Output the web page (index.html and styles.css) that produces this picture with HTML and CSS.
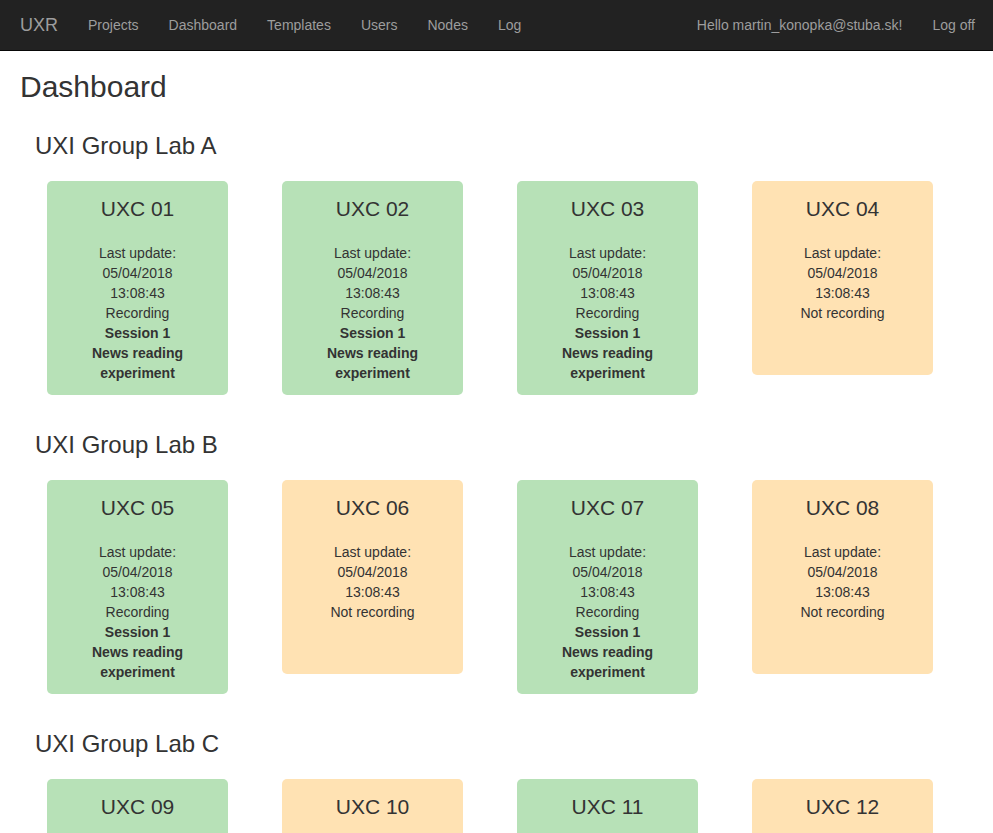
FILE: index.html
```html
<!DOCTYPE html>
<html lang="en">
<head>
<meta charset="utf-8">
<meta name="viewport" content="width=device-width, initial-scale=1">
<title>Dashboard - UXR</title>
<link rel="stylesheet" href="styles.css">
</head>
<body>
<header class="navbar">
  <a class="brand" href="#">UXR</a>
  <nav class="nav">
    <a href="#">Projects</a>
    <a href="#">Dashboard</a>
    <a href="#">Templates</a>
    <a href="#">Users</a>
    <a href="#">Nodes</a>
    <a href="#">Log</a>
  </nav>
  <nav class="nav account">
    <a href="#">Hello martin_konopka@stuba.sk!</a>
    <a href="#">Log off</a>
  </nav>
</header>
<main>
  <h1>Dashboard</h1>
  <section class="group">
    <h2>UXI Group Lab A</h2>
    <div class="nodes">
      <article class="node recording"><h3>UXC 01</h3><p>Last update: 05/04/2018 13:08:43</p><p>Recording</p><p><strong>Session 1</strong></p><p><strong>News reading experiment</strong></p></article>
      <article class="node recording"><h3>UXC 02</h3><p>Last update: 05/04/2018 13:08:43</p><p>Recording</p><p><strong>Session 1</strong></p><p><strong>News reading experiment</strong></p></article>
      <article class="node recording"><h3>UXC 03</h3><p>Last update: 05/04/2018 13:08:43</p><p>Recording</p><p><strong>Session 1</strong></p><p><strong>News reading experiment</strong></p></article>
      <article class="node"><h3>UXC 04</h3><p>Last update: 05/04/2018 13:08:43</p><p>Not recording</p></article>
    </div>
  </section>
  <section class="group">
    <h2>UXI Group Lab B</h2>
    <div class="nodes">
      <article class="node recording"><h3>UXC 05</h3><p>Last update: 05/04/2018 13:08:43</p><p>Recording</p><p><strong>Session 1</strong></p><p><strong>News reading experiment</strong></p></article>
      <article class="node"><h3>UXC 06</h3><p>Last update: 05/04/2018 13:08:43</p><p>Not recording</p></article>
      <article class="node recording"><h3>UXC 07</h3><p>Last update: 05/04/2018 13:08:43</p><p>Recording</p><p><strong>Session 1</strong></p><p><strong>News reading experiment</strong></p></article>
      <article class="node"><h3>UXC 08</h3><p>Last update: 05/04/2018 13:08:43</p><p>Not recording</p></article>
    </div>
  </section>
  <section class="group">
    <h2>UXI Group Lab C</h2>
    <div class="nodes">
      <article class="node recording"><h3>UXC 09</h3></article>
      <article class="node"><h3>UXC 10</h3></article>
      <article class="node recording"><h3>UXC 11</h3></article>
      <article class="node"><h3>UXC 12</h3></article>
    </div>
  </section>
</main>
</body>
</html>
```
FILE: styles.css
```css
* { box-sizing: border-box; }
html, body { height: 100%; }
body {
  margin: 0;
  display: flex;
  flex-direction: column;
  overflow: hidden;
  background: #fff;
  color: #333;
  font: 14px/20px "Liberation Sans", Arial, sans-serif;
}
.navbar {
  display: flex;
  flex: none;
  min-height: 51px;
  padding: 0 3px 0 5px;
  background: #222;
  border-bottom: 1px solid #080808;
}
.navbar a {
  padding: 15px;
  color: #9d9d9d;
  text-decoration: none;
}
.navbar a:hover { color: #fff; }
.navbar .brand { font-size: 18px; }
.nav { display: flex; }
.account { margin-left: auto; }
main {
  flex: 1;
  min-height: 0;
  overflow: hidden;
  padding: 19px 18px 0 20px;
}
h1, h2, h3, p { margin: 0; font-weight: 500; }
h1 { font-size: 30px; line-height: 33px; }
.group { padding: 30px 15px 0; }
.group + .group { padding-top: 37px; }
h2 { font-size: 24px; line-height: 26px; }
.nodes {
  display: grid;
  grid-template-columns: repeat(4, 1fr);
  align-items: start;
  margin: 22px 0 0 -15px;
}
.node {
  min-height: 194px;
  margin: 0 27px;
  padding: 15px 35px 12px;
  border-radius: 5px;
  background: #ffe2b3;
  text-align: center;
}
.recording {
  min-height: 214px;
  background: #b7e1b7;
}
h3 { margin: 0 -30px 22px; font-size: 21px; line-height: 25px; }
```
